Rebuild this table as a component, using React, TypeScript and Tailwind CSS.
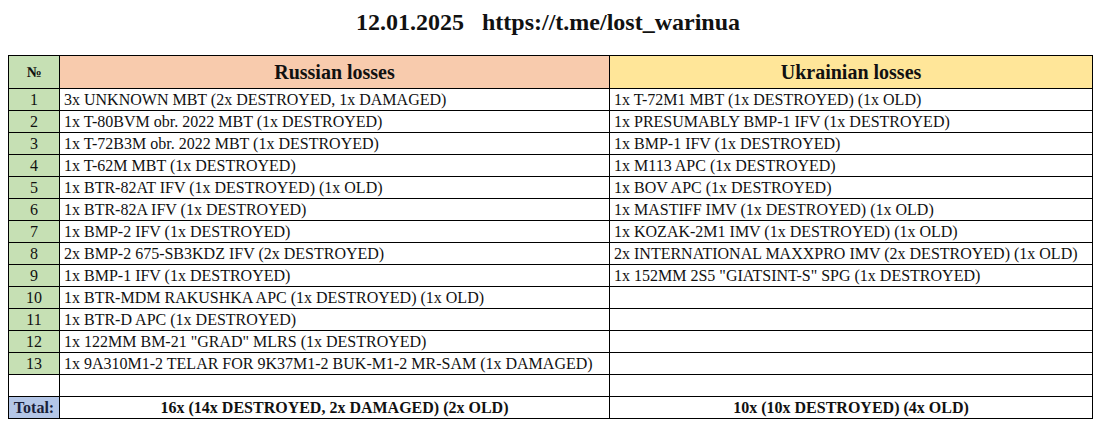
const rows: [string, string][] = [
  ['3x UNKNOWN MBT (2x DESTROYED, 1x DAMAGED)', '1x T-72M1 MBT (1x DESTROYED) (1x OLD)'],
  ['1x T-80BVM obr. 2022 MBT (1x DESTROYED)', '1x PRESUMABLY BMP-1 IFV (1x DESTROYED)'],
  ['1x T-72B3M obr. 2022 MBT (1x DESTROYED)', '1x BMP-1 IFV (1x DESTROYED)'],
  ['1x T-62M MBT (1x DESTROYED)', '1x M113 APC (1x DESTROYED)'],
  ['1x BTR-82AT IFV (1x DESTROYED) (1x OLD)', '1x BOV APC (1x DESTROYED)'],
  ['1x BTR-82A IFV (1x DESTROYED)', '1x MASTIFF IMV (1x DESTROYED) (1x OLD)'],
  ['1x BMP-2 IFV (1x DESTROYED)', '1x KOZAK-2M1 IMV (1x DESTROYED) (1x OLD)'],
  ['2x BMP-2 675-SB3KDZ IFV (2x DESTROYED)', '2x INTERNATIONAL MAXXPRO IMV (2x DESTROYED) (1x OLD)'],
  ['1x BMP-1 IFV (1x DESTROYED)', '1x 152MM 2S5 "GIATSINT-S" SPG (1x DESTROYED)'],
  ['1x BTR-MDM RAKUSHKA APC (1x DESTROYED) (1x OLD)', ''],
  ['1x BTR-D APC (1x DESTROYED)', ''],
  ['1x 122MM BM-21 "GRAD" MLRS (1x DESTROYED)', ''],
  ['1x 9A310M1-2 TELAR FOR 9K37M1-2 BUK-M1-2 MR-SAM (1x DAMAGED)', ''],
]

export default function App() {
  return (
    <div className="w-[1096px] h-[427px] bg-white text-[#111] font-['Liberation_Serif',serif]">
      <div className="h-[44px] flex items-center justify-center text-[24px] font-bold whitespace-pre mb-[11px]">
        {'12.01.2025   https://t.me/lost_warinua'}
      </div>
      <table className="ml-2 border-collapse table-fixed w-[1084px]">
        <colgroup>
          <col className="w-[51px]" />
          <col className="w-[550px]" />
          <col className="w-[483px]" />
        </colgroup>
        <thead>
          <tr className="h-[33px]">
            <th className="border border-black bg-[#c6e0b4] text-[15px] font-bold p-0">№</th>
            <th className="border border-black bg-[#f8cbad] text-[20px] font-bold p-0">Russian losses</th>
            <th className="border border-black bg-[#ffe699] text-[20px] font-bold p-0">Ukrainian losses</th>
          </tr>
        </thead>
        <tbody className="text-[16px] leading-[20px]">
          {rows.map((r, i) => (
            <tr key={i} className="h-[22px]">
              <td className="border border-black bg-[#c6e0b4] text-center p-0">{i + 1}</td>
              <td className="border border-black px-1 py-0 whitespace-nowrap">{r[0]}</td>
              <td className="border border-black px-1 py-0 whitespace-nowrap">{r[1]}</td>
            </tr>
          ))}
          <tr className="h-[22px]">
            <td className="border border-black p-0"></td>
            <td className="border border-black p-0"></td>
            <td className="border border-black p-0"></td>
          </tr>
          <tr className="h-[22px] font-bold">
            <td className="border border-black bg-[#b4c6e7] text-[#1a1f3a] text-center p-0">Total:</td>
            <td className="border border-black text-center p-0">16x (14x DESTROYED, 2x DAMAGED) (2x OLD)</td>
            <td className="border border-black text-center p-0">10x (10x DESTROYED) (4x OLD)</td>
          </tr>
        </tbody>
      </table>
    </div>
  )
}
